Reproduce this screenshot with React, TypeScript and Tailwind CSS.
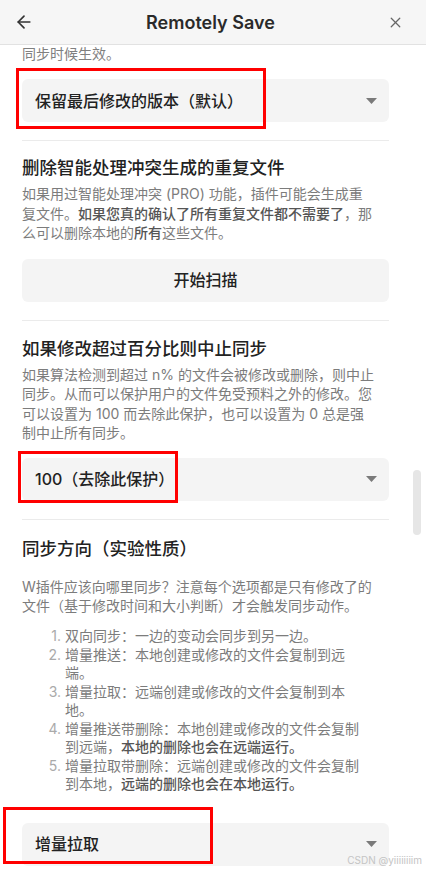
import React from "react";
import { ArrowLeft, X } from "lucide-react";

const FONT = {
  fontFamily: 'Inter, "Noto Sans CJK SC", sans-serif',
};

const Caret = () => (
  <svg width="11" height="6" viewBox="0 0 11 6" className="shrink-0">
    <path d="M0 0 L11 0 L5.5 6 Z" fill="#7a7a7a" />
  </svg>
);

interface SelectBoxProps {
  value: string;
  highlight: string;
}

// fake dropdown, the red frame is the annotation drawn on the screenshot
const SelectBox = ({ value, highlight }: SelectBoxProps) => {
  return (
    <div className="relative">
      <div className="flex h-[43px] items-center justify-between rounded-[6px] bg-[#f4f4f4] pl-[13px] pr-[12px]">
        <span className="text-[16px] font-medium text-[#222]">{value}</span>
        <Caret />
      </div>
      <div
        className={`pointer-events-none absolute border-[3px] border-[#ff0000] ${highlight}`}
      />
    </div>
  );
};

const Divider = () => <div className="h-px bg-[#ebebeb]" />;

const App = () => {
  return (
    <div
      className="relative h-[872px] w-[426px] overflow-hidden bg-white"
      style={FONT}
    >
      <header className="flex h-[45px] items-center justify-between border-b border-[#e2e2e2] bg-[#f6f6f6] px-[14px]">
        <ArrowLeft size={20} strokeWidth={2} color="#333" />
        <h1 className="text-[18px] font-semibold text-[#2a2a2a]">
          Remotely Save
        </h1>
        <X size={17} strokeWidth={1.8} color="#666" className="mr-[8px]" />
      </header>

      <main className="pl-[22px] pr-[37px]">
        <p className="h-[18px] text-[14px] leading-[18px] text-[#808080]">
          同步时候生效。
        </p>

        <div className="mt-[16px]">
          <SelectBox
            value="保留最后修改的版本（默认）"
            highlight="left-[-6px] top-[-11px] h-[61px] w-[250px]"
          />
        </div>

        <div className="mt-[18px]">
          <Divider />
        </div>

        <section className="pt-[15px]">
          <h2 className="text-[17.5px] font-medium leading-[24px] text-[#222]">
            删除智能处理冲突生成的重复文件
          </h2>
          <p className="mt-[4px] whitespace-nowrap text-[14px] leading-[19.5px] text-[#7c7c7c]">
            如果用过智能处理冲突 (PRO) 功能，插件可能会生成重
            <br />
            复文件。
            <span className="font-medium text-[#555]">
              如果您真的确认了所有重复文件都不需要了
            </span>
            ，那
            <br />
            么可以删除本地的<span className="font-medium text-[#555]">所有</span>
            这些文件。
          </p>
          <button className="mt-[16px] flex h-[43px] w-full items-center justify-center rounded-[6px] bg-[#f4f4f4] text-[16px] font-medium text-[#222]">
            开始扫描
          </button>
        </section>

        <div className="mt-[18px]">
          <Divider />
        </div>

        <section className="pt-[16px]">
          <h2 className="text-[17.5px] font-medium leading-[24px] text-[#222]">
            如果修改超过百分比则中止同步
          </h2>
          <p className="mt-[4px] whitespace-nowrap text-[14px] leading-[19.5px] text-[#7c7c7c]">
            如果算法检测到超过 n% 的文件会被修改或删除，则中止
            <br />
            同步。从而可以保护用户的文件免受预料之外的修改。您
            <br />
            可以设置为 100 而去除此保护，也可以设置为 0 总是强
            <br />
            制中止所有同步。
          </p>
          <div className="mt-[15px]">
            <SelectBox
              value="100（去除此保护）"
              highlight="left-[-4px] top-[-7px] h-[52px] w-[160px]"
            />
          </div>
        </section>

        <div className="mt-[18px]">
          <Divider />
        </div>

        <section className="pt-[17px]">
          <h2 className="text-[17.5px] font-medium leading-[24px] text-[#222]">
            同步方向（实验性质）
          </h2>
          <p className="mt-[16px] whitespace-nowrap text-[14px] leading-[19.5px] text-[#7c7c7c]">
            W插件应该向哪里同步？注意每个选项都是只有修改了的
            <br />
            文件（基于修改时间和大小判断）才会触发同步动作。
          </p>
          <ol className="mt-[11px] flex flex-col gap-[1px] whitespace-nowrap text-[14px] leading-[18px] text-[#7c7c7c]">
            <li className="flex">
              <span className="w-[39px] text-right text-[#aaa]">1.</span>
              <span className="ml-[4px]">双向同步：一边的变动会同步到另一边。</span>
            </li>
            <li className="flex">
              <span className="w-[39px] text-right text-[#aaa]">2.</span>
              <span className="ml-[4px]">
                增量推送：本地创建或修改的文件会复制到远
                <br />
                端。
              </span>
            </li>
            <li className="flex">
              <span className="w-[39px] text-right text-[#aaa]">3.</span>
              <span className="ml-[4px]">
                增量拉取：远端创建或修改的文件会复制到本
                <br />
                地。
              </span>
            </li>
            <li className="flex">
              <span className="w-[39px] text-right text-[#aaa]">4.</span>
              <span className="ml-[4px]">
                增量推送带删除：本地创建或修改的文件会复制
                <br />
                到远端，
                <span className="font-medium text-[#555]">
                  本地的删除也会在远端运行。
                </span>
              </span>
            </li>
            <li className="flex">
              <span className="w-[39px] text-right text-[#aaa]">5.</span>
              <span className="ml-[4px]">
                增量拉取带删除：远端创建或修改的文件会复制
                <br />
                到本地，
                <span className="font-medium text-[#555]">
                  远端的删除也会在本地运行。
                </span>
              </span>
            </li>
          </ol>
          <div className="mt-[30px]">
            <SelectBox
              value="增量拉取"
              highlight="left-[-19px] top-[-16px] h-[57px] w-[210px]"
            />
          </div>
        </section>
      </main>

      {/* scrollbar thumb */}
      <div className="absolute left-[413px] top-[470px] h-[65px] w-[8px] rounded-full bg-[#e6e6e6]" />

      <span className="absolute bottom-[4px] right-[4px] text-[10px] text-[#c4c4c4]">
        CSDN @yiiiiiiiim
      </span>
    </div>
  );
};

export default App;
